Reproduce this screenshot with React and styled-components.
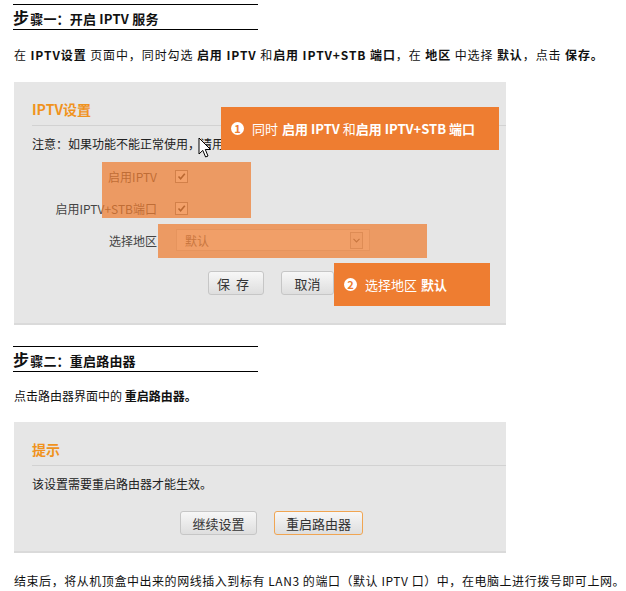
import React from "react";
import styled, { createGlobalStyle } from "styled-components";

const Global = createGlobalStyle`
  html, body { margin: 0; padding: 0; background: #fff; }
  body { font-family: "Noto Sans CJK SC", "Liberation Sans", sans-serif; color: #111; }
`;

const Page = styled.div`
  width: 626px;
  padding: 4px 0 0 13px;
  box-sizing: border-box;
`;

const StepHead = styled.div`
  width: 245px;
  height: 24px;
  border-top: 1px solid #000;
  border-bottom: 1px solid #000;
  display: flex;
  align-items: center;
  font-size: 13px;
  font-weight: bold;
  box-sizing: content-box;
  margin-top: ${(p) => p.$mt || 0}px;
  letter-spacing: 0.2px;
`;

const Big = styled.span`
  font-size: 16px;
  margin-right: 1px;
`;

const Para = styled.p`
  margin: ${(p) => p.$mt}px 0 0 1px;
  font-size: 12px;
  line-height: 20px;
  white-space: nowrap;
  letter-spacing: ${(p) => p.$ls || 0}px;
  b { font-weight: bold; }
`;

const Panel = styled.div`
  position: relative;
  margin: ${(p) => p.$mt}px 0 0 1px;
  width: 492px;
  height: ${(p) => p.$h}px;
  background: #e6e6e6;
  border-bottom: 2px solid #dadada;
  box-sizing: border-box;
  padding: 17px 0 0 18px;
`;

const PanelTitle = styled.div`
  color: #f0931e;
  font-size: 14px;
  font-weight: bold;
  line-height: 20px;
  padding-bottom: 6px;
  border-bottom: 1px solid #d2d2d2;
`;

const Note = styled.div`
  font-size: 12px;
  color: #222;
  line-height: 20px;
  margin-top: ${(p) => p.$mt}px;
`;

const Form = styled.div`
  margin-top: 6px;
  display: flex;
  flex-direction: column;
`;

const Row = styled.div`
  height: 32px;
  display: flex;
  align-items: center;
`;

const Label = styled.div`
  width: 125px;
  text-align: right;
  font-size: 12px;
  color: #444;
`;

const Check = styled.div`
  margin-left: 18px;
  width: 11px;
  height: 11px;
  border: 1px solid #8a8a8a;
  background: #fff;
  display: flex;
  align-items: center;
  justify-content: center;
`;

const Select = styled.div`
  margin-left: 19px;
  width: 194px;
  height: 22px;
  border: 1px solid #cfcfcf;
  background: #f6f6f6;
  box-sizing: border-box;
  display: flex;
  align-items: center;
  justify-content: space-between;
  padding: 0 6px 0 8px;
  font-size: 12px;
  color: #666;
`;

const SelArrow = styled.div`
  width: 13px;
  height: 17px;
  border: 1px solid #b5b5b5;
  background: #eee;
  display: flex;
  align-items: center;
  justify-content: center;
  box-sizing: border-box;
`;

const Buttons = styled.div`
  display: flex;
  gap: ${(p) => p.$gap}px;
  margin: ${(p) => p.$mt}px 0 0 ${(p) => p.$ml}px;
`;

const Btn = styled.div`
  width: ${(p) => p.$w}px;
  height: 24px;
  box-sizing: border-box;
  border: 1px solid ${(p) => (p.$hl ? "#f0a552" : "#c6c6c6")};
  border-radius: 3px;
  background: linear-gradient(#f7f7f7, #dedede);
  font-size: 13px;
  color: #333;
  display: flex;
  align-items: center;
  justify-content: center;
  letter-spacing: ${(p) => p.$ls || 0}px;
`;

const Shade = styled.div`
  position: absolute;
  background: rgba(238, 125, 49, 0.72);
`;

const Callout = styled.div`
  position: absolute;
  background: #ee7d31;
  color: #fff;
  font-size: 13px;
  display: flex;
  align-items: center;
  padding-left: 10px;
  box-sizing: border-box;
  white-space: nowrap;
  b { font-weight: bold; margin-left: 4px; }
`;

const Num = styled.span`
  width: 13px;
  height: 13px;
  border-radius: 50%;
  background: #fff;
  color: #ee7d31;
  font-size: 11px;
  font-weight: bold;
  display: inline-flex;
  align-items: center;
  justify-content: center;
  margin-right: 8px;
  line-height: 1;
`;

const Cursor = styled.svg`
  position: absolute;
`;

const CheckMark = () => (
  <svg width="9" height="9" viewBox="0 0 9 9">
    <path d="M1.5 4.5 L3.6 6.8 L7.8 1.8" fill="none" stroke="#333" strokeWidth="1.6" />
  </svg>
);

export default function App() {
  return (
    <>
      <Global />
      <Page>
        <StepHead>
          <span><Big>步</Big>骤一：开启 IPTV 服务</span>
        </StepHead>
        <Para $mt={15} $ls={0.9}>
          在 <b>IPTV设置</b> 页面中，同时勾选 <b>启用 IPTV</b> 和<b>启用 IPTV+STB 端口</b>，在 <b>地区</b> 中选择 <b>默认</b>，点击 <b>保存。</b>
        </Para>
        <Panel $mt={17} $h={243}>
          <PanelTitle>IPTV设置</PanelTitle>
          <Note $mt={8}>注意：如果功能不能正常使用，请用户自行设置。</Note>
          <Form>
            <Row>
              <Label>启用IPTV</Label>
              <Check><CheckMark /></Check>
            </Row>
            <Row>
              <Label>启用IPTV+STB端口</Label>
              <Check><CheckMark /></Check>
            </Row>
            <Row>
              <Label>选择地区</Label>
              <Select>
                默认
                <SelArrow>
                  <svg width="7" height="5" viewBox="0 0 7 5">
                    <path d="M0.5 0.8 L3.5 3.8 L6.5 0.8" fill="none" stroke="#666" strokeWidth="1.2" />
                  </svg>
                </SelArrow>
              </Select>
            </Row>
          </Form>
          <Buttons $gap={17} $mt={15} $ml={176}>
            <Btn $w={56} $ls={6}>保存</Btn>
            <Btn $w={53}>取消</Btn>
          </Buttons>

          <Shade style={{ left: 88, top: 80, width: 149, height: 56 }} />
          <Shade style={{ left: 144, top: 142, width: 269, height: 34 }} />
          <Callout style={{ left: 207, top: 25, width: 278, height: 43 }}>
            <Num>1</Num>同时 <b>启用 IPTV</b>&nbsp;和<b style={{ marginLeft: 0 }}>启用 IPTV+STB 端口</b>
          </Callout>
          <Callout style={{ left: 320, top: 181, width: 156, height: 43 }}>
            <Num>2</Num>选择地区 <b>默认</b>
          </Callout>
          <Cursor style={{ left: 184, top: 55 }} width="14" height="22" viewBox="0 0 14 22">
            <path d="M1 1 L1 17 L4.8 13.4 L7.6 20 L10 19 L7.3 12.5 L12.5 12.5 Z" fill="#fff" stroke="#000" strokeWidth="1" strokeLinejoin="round" />
          </Cursor>
        </Panel>

        <StepHead $mt={21}>
          <span><Big>步</Big>骤二：重启路由器</span>
        </StepHead>
        <Para $mt={14}>
          点击路由器界面中的 <b>重启路由器。</b>
        </Para>
        <Panel $mt={16} $h={131}>
          <PanelTitle>提示</PanelTitle>
          <Note $mt={8}>该设置需要重启路由器才能生效。</Note>
          <Buttons $gap={17} $mt={17} $ml={148}>
            <Btn $w={77}>继续设置</Btn>
            <Btn $w={89} $hl>重启路由器</Btn>
          </Buttons>
        </Panel>
        <Para $mt={18} $ls={0.55}>
          结束后，将从机顶盒中出来的网线插入到标有 LAN3 的端口（默认 IPTV 口）中，在电脑上进行拨号即可上网。
        </Para>
      </Page>
    </>
  );
}
